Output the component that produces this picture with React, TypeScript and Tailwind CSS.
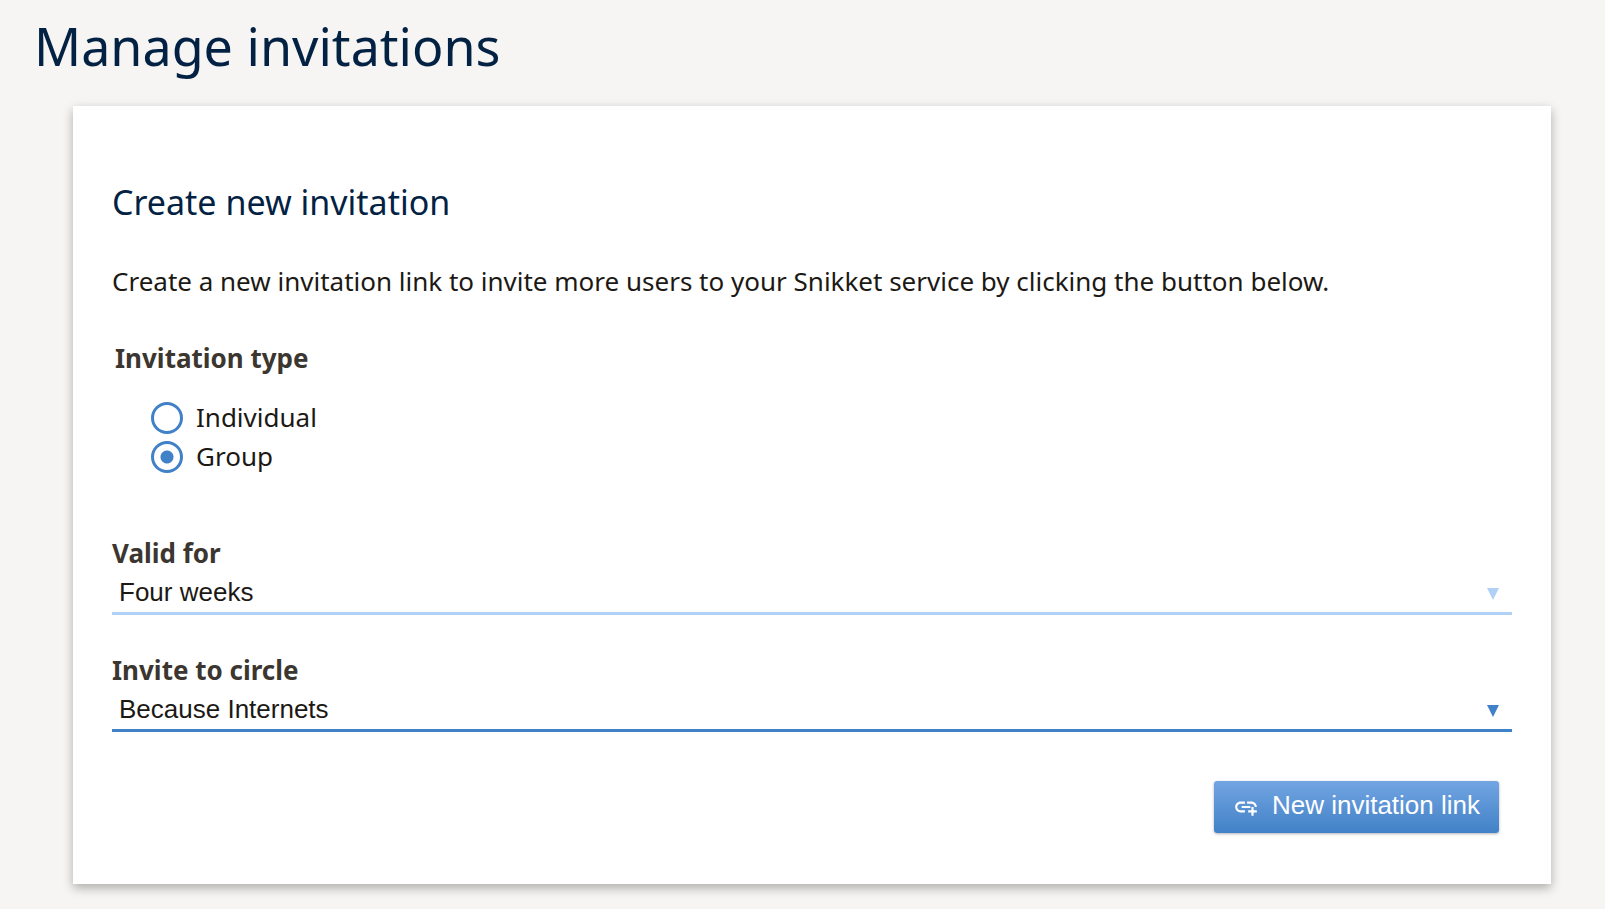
import { useState } from "react";
import { MdAddLink } from "react-icons/md";

const types = ["Individual", "Group"];

function SelectField({
  id,
  label,
  options,
  active = false,
}: {
  id: string;
  label: string;
  options: string[];
  active?: boolean;
}) {
  return (
    <div className="flex flex-col">
      <label htmlFor={id} className="font-bold text-[#3c3630]">
        {label}
      </label>
      <div className="relative">
        <select
          id={id}
          className={`block h-[42px] w-full appearance-none border-b-3 bg-transparent pr-10 pl-[7px] font-['Liberation_Sans',Arial,sans-serif] text-[26px] leading-[39px] outline-none ${
            active ? "border-[#4181c7]" : "border-[#b1d0f5]"
          }`}
        >
          {options.map((o) => (
            <option key={o}>{o}</option>
          ))}
        </select>
        <svg
          viewBox="0 0 12 12"
          aria-hidden="true"
          className={`pointer-events-none absolute top-[15px] right-[13px] size-3 ${
            active ? "fill-[#4181c7]" : "fill-[#b1d0f5]"
          }`}
        >
          <path d="M0 0h12L6 12z" />
        </svg>
      </div>
    </div>
  );
}

export default function App() {
  const [type, setType] = useState("Group");

  return (
    <div className="min-h-screen bg-[#f6f5f3] pt-[6px] pb-[25px] font-['Noto_Sans',sans-serif] text-[26px] leading-[39px] text-[#1c1915]">
      <h1 className="px-[34px] text-[52px] leading-[79px] text-[#032243]">Manage invitations</h1>
      <main className="mt-[21px] mr-[54px] ml-[73px] bg-white px-[39px] pt-[70px] pb-[51px] shadow-[0_4px_10px_rgba(0,0,0,0.3)]">
        <h2 className="text-[34px] leading-[52px] text-[#032243]">Create new invitation</h2>
        <p className="mt-[34px]">
          Create a new invitation link to invite more users to your Snikket service by clicking the button below.
        </p>
        <form className="mt-[38px]" onSubmit={(e) => e.preventDefault()}>
          <fieldset>
            <legend className="px-[3px] font-bold text-[#3c3630]">Invitation type</legend>
            <div className="mt-5 flex flex-col items-start pl-[39px]">
              {types.map((t) => (
                <label key={t} className="flex items-center gap-[13px]">
                  <input
                    type="radio"
                    name="type"
                    checked={type === t}
                    onChange={() => setType(t)}
                    className="size-8 appearance-none rounded-full border-3 border-[#4181c7] bg-white checked:bg-[radial-gradient(circle,#4181c7_6px,transparent_7px)]"
                  />
                  {t}
                </label>
              ))}
            </div>
          </fieldset>
          <div className="mt-[58px] flex flex-col gap-9">
            <SelectField id="lifetime" label="Valid for" options={["Four weeks", "One week", "One day"]} />
            <SelectField id="circle" label="Invite to circle" options={["Because Internets"]} active />
          </div>
          <div className="mt-[49px] flex justify-end pr-[13px]">
            <button
              type="submit"
              className="flex h-[52px] items-center gap-[13px] rounded-[3px] bg-linear-to-b from-[#72a5e2] to-[#4181c7] px-[19px] font-['Liberation_Sans',Arial,sans-serif] text-white shadow-[0_1px_3px_rgba(0,0,0,0.3)]"
            >
              <MdAddLink aria-hidden="true" className="size-[26px]" />
              <span className="pb-1">New invitation link</span>
            </button>
          </div>
        </form>
      </main>
    </div>
  );
}
